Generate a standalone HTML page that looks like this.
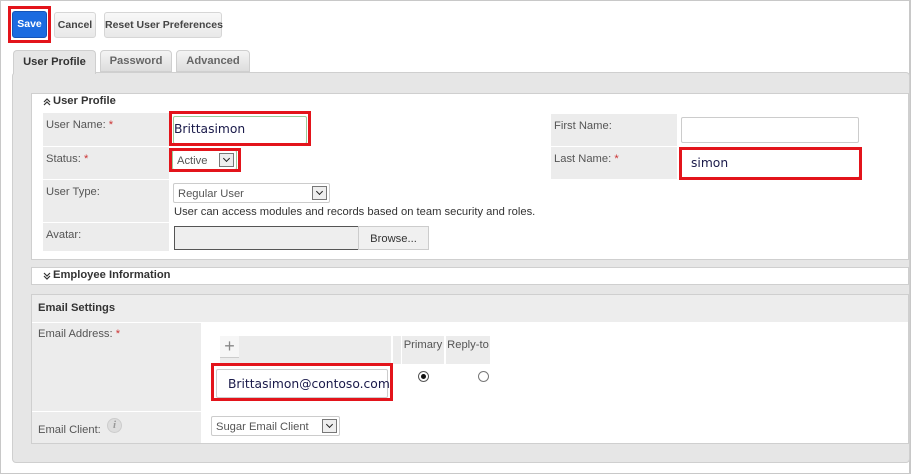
<!DOCTYPE html>
<html><head><meta charset="utf-8"><style>
*{box-sizing:border-box;margin:0;padding:0}
body{width:911px;height:474px;position:relative;background:#fff;font-family:"Liberation Sans",Arial,sans-serif;font-size:11.2px;color:#444;overflow:hidden;white-space:nowrap}
.a{position:absolute}
.btn{position:absolute;border:1px solid #d6d6d6;border-radius:3px;background:linear-gradient(#f8f8f8,#e8e8e8);font-weight:bold;font-size:10.5px;color:#444;text-align:center}
.red{position:absolute;border:3px solid #e3141b}
.lbl{position:absolute;background:#ececec;padding:6px 3px 4px;color:#555}
.st{color:#c33}
.inp{position:absolute;background:#fff;border:1px solid #ccc;border-radius:2px}
.sel{position:absolute;background:#fff;border:1px solid #ccc;border-radius:2px;color:#555;padding:4px 4px 2px}
.dd{position:absolute;right:2px;top:2px;width:15px;height:14px;border:1px solid #777;background:#eee}
.dd:after{content:"";position:absolute;left:4px;top:2px;width:4px;height:4px;border-right:1.5px solid #222;border-bottom:1.5px solid #222;transform:rotate(45deg)}
.cal{font-family:"DejaVu Sans",sans-serif;color:#1a1a4a;font-size:12.3px}
</style></head><body>
<div class="a" style="left:0;top:0;width:911px;height:474px;border:1px solid #c8c8c8"></div>
<div class="a" style="left:909px;top:0;width:2px;height:474px;background:#c8c8c8"></div>
<div class="btn" style="left:12px;top:11px;width:35px;height:27px;line-height:25px;background:#1b6be0;border-color:#1554b8;color:#fff">Save</div>
<div class="red" style="left:8px;top:6px;width:43px;height:37px"></div>
<div class="btn" style="left:54px;top:12px;width:42px;height:26px;line-height:24px">Cancel</div>
<div class="btn" style="left:104px;top:12px;width:118px;height:26px;line-height:24px">Reset User Preferences</div>
<div class="a" style="left:12px;top:72px;width:898px;height:391px;background:#e6e6e6;border:1px solid #cfcfcf;border-radius:4px"></div>
<div class="a" style="left:13px;top:50px;width:83px;height:24px;background:#e6e6e6;border:1px solid #cfcfcf;border-bottom:none;border-radius:4px 4px 0 0;font-weight:bold;color:#333;text-align:center;line-height:22px">User Profile</div>
<div class="a" style="left:100px;top:50px;width:72px;height:22px;background:linear-gradient(#f4f4f4,#ddd);border:1px solid #cfcfcf;border-radius:4px 4px 0 0;font-weight:bold;color:#666;text-align:center;line-height:21px">Password</div>
<div class="a" style="left:176px;top:50px;width:74px;height:22px;background:linear-gradient(#f4f4f4,#ddd);border:1px solid #cfcfcf;border-radius:4px 4px 0 0;font-weight:bold;color:#666;text-align:center;line-height:21px">Advanced</div>
<div class="a" style="left:31px;top:93px;width:878px;height:167px;background:#fff;border:1px solid #cfcfcf"></div>
<svg class="a" style="left:43px;top:98px" width="8" height="8"><path d="M1 4 L4 1 L7 4 M1 7 L4 4 L7 7" fill="none" stroke="#333" stroke-width="1.2"/></svg>
<div class="a" style="left:53px;top:95px;font-weight:bold;color:#333">User Profile</div>
<div class="lbl" style="left:43px;top:113px;width:126px;height:33px">User Name: <span class="st">*</span></div>
<div class="lbl" style="left:43px;top:147px;width:126px;height:32px">Status: <span class="st">*</span></div>
<div class="lbl" style="left:43px;top:180px;width:126px;height:42px">User Type:</div>
<div class="lbl" style="left:43px;top:223px;width:126px;height:28px">Avatar:</div>
<div class="inp" style="left:173px;top:116px;width:134px;height:28px;border-color:#9c9"></div>
<div class="a cal" style="left:174px;top:122px">Brittasimon</div>
<div class="red" style="left:169px;top:111px;width:142px;height:35px"></div>
<div class="sel" style="left:172px;top:150px;width:65px;height:20px;border-color:#9c9">Active<div class="dd"></div></div>
<div class="red" style="left:169px;top:148px;width:72px;height:24px"></div>
<div class="sel" style="left:173px;top:183px;width:157px;height:20px">Regular User<div class="dd"></div></div>
<div class="a" style="left:174px;top:206px;color:#333">User can access modules and records based on team security and roles.</div>
<div class="a" style="left:174px;top:226px;width:184px;height:24px;background:#eee;border:1px solid #555;border-right:none"></div>
<div class="a" style="left:358px;top:226px;width:71px;height:24px;background:#f0f0f0;border:1px solid #ccc;text-align:center;line-height:24px;color:#333">Browse...</div>
<div class="lbl" style="left:551px;top:114px;width:126px;height:32px">First Name:</div>
<div class="lbl" style="left:551px;top:147px;width:126px;height:32px">Last Name: <span class="st">*</span></div>
<div class="inp" style="left:681px;top:117px;width:178px;height:26px"></div>
<div class="inp" style="left:680px;top:148px;width:180px;height:30px;border-color:#9c9"></div>
<div class="a cal" style="left:691px;top:156px">simon</div>
<div class="red" style="left:679px;top:147px;width:183px;height:33px"></div>
<div class="a" style="left:31px;top:267px;width:878px;height:18px;background:#fff;border:1px solid #cfcfcf"></div>
<svg class="a" style="left:43px;top:272px" width="8" height="8"><path d="M1 1 L4 4 L7 1 M1 4 L4 7 L7 4" fill="none" stroke="#333" stroke-width="1.2"/></svg>
<div class="a" style="left:53px;top:269px;font-weight:bold;color:#333">Employee Information</div>
<div class="a" style="left:31px;top:294px;width:878px;height:150px;background:#fff;border:1px solid #cfcfcf"></div>
<div class="a" style="left:32px;top:295px;width:876px;height:27px;background:#ededed"></div>
<div class="a" style="left:38px;top:302px;font-weight:bold;color:#333">Email Settings</div>
<div class="lbl" style="left:32px;top:323px;width:169px;height:88px;padding:5px 6px">Email Address: <span class="st">*</span></div>
<div class="lbl" style="left:32px;top:412px;width:169px;height:31px;padding:12px 6px 0">Email Client:</div>
<div class="a" style="left:107px;top:418px;width:15px;height:15px;border-radius:50%;background:#ddd;border:1px solid #ccc;color:#999;font-style:italic;font-family:'Liberation Serif',serif;font-weight:bold;text-align:center;line-height:13px;font-size:11px">i</div>
<div class="a" style="left:220px;top:336px;width:171px;height:28px;background:#ececec"></div>
<div class="a" style="left:220px;top:336px;width:19px;height:22px;background:#f6f6f6;border-bottom:1px solid #ccc;color:#888;font-size:18px;text-align:center;line-height:20px">+</div>
<div class="a" style="left:393px;top:336px;width:8px;height:28px;background:#ececec"></div>
<div class="a" style="left:402px;top:336px;width:42px;height:28px;background:#ececec;padding-top:3px;color:#555;text-align:center">Primary</div>
<div class="a" style="left:446px;top:336px;width:44px;height:28px;background:#ececec;padding-top:3px;color:#555;text-align:center">Reply-to</div>
<div class="a" style="left:418px;top:371px;width:11px;height:11px;border-radius:50%;border:1px solid #555;background:#fff"></div>
<div class="a" style="left:421px;top:374px;width:5px;height:5px;border-radius:50%;background:#111"></div>
<div class="a" style="left:478px;top:371px;width:11px;height:11px;border-radius:50%;border:1px solid #777;background:#fff"></div>
<div class="inp" style="left:216px;top:369px;width:172px;height:29px;border-color:#ccc"></div>
<div class="a cal" style="left:228px;top:377px">Brittasimon@contoso.com</div>
<div class="red" style="left:211px;top:363px;width:182px;height:38px"></div>
<div class="sel" style="left:211px;top:416px;width:129px;height:20px">Sugar Email Client<div class="dd"></div></div>
</body></html>
